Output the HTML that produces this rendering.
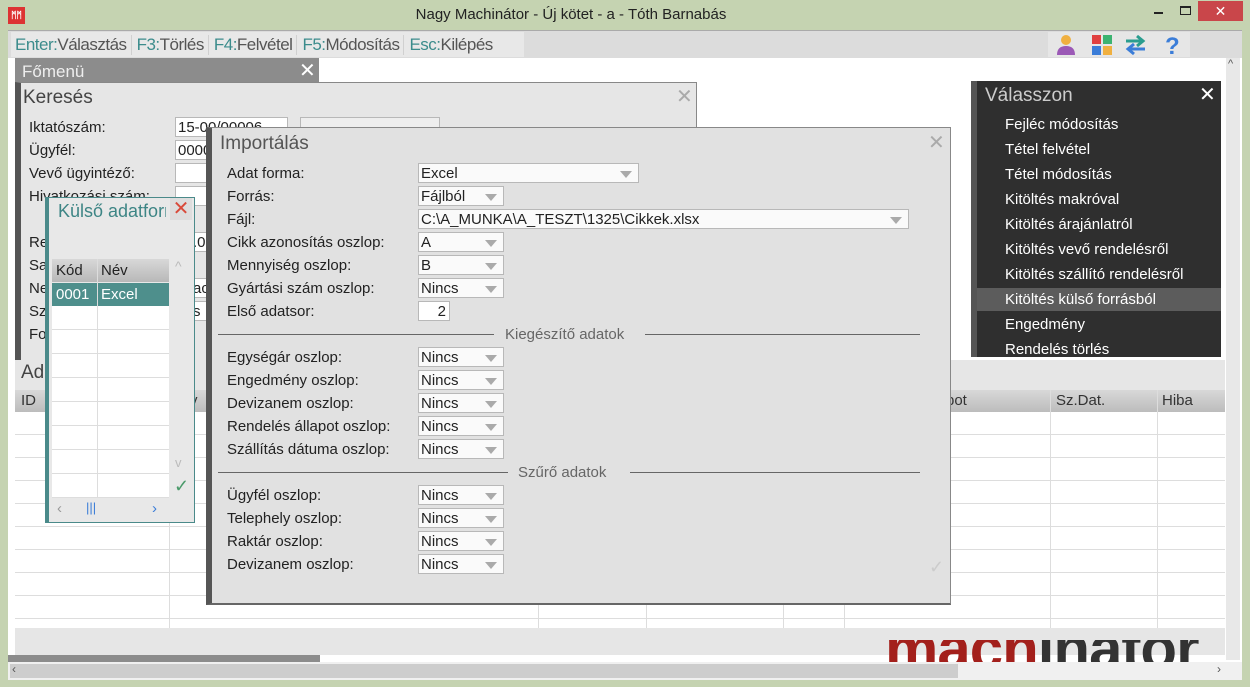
<!DOCTYPE html>
<html><head><meta charset="utf-8"><style>
*{margin:0;padding:0;box-sizing:border-box}
body{width:1250px;height:687px;overflow:hidden;background:#c5d3b1;font-family:"Liberation Sans",sans-serif;font-size:15px;color:#222;position:relative}
.a{position:absolute}
.lbl{position:absolute;font-size:15px;color:#222;white-space:nowrap}
.inp{position:absolute;background:#fff;border:1px solid #b8b8b8;height:20px;font-size:15px;padding-left:2px;line-height:20px;white-space:nowrap;overflow:hidden}
.dd::after{content:"";position:absolute;right:6px;top:7px;border-left:6px solid transparent;border-right:6px solid transparent;border-top:7px solid #aaa}
.dd{background:#fafafa}
.sep{position:absolute;height:1px;background:#666}
.mi{position:absolute;left:28px;color:#fff;font-size:15px;white-space:nowrap}
.tb{display:inline-block;padding:0 4px 0 5px;border-right:1px solid #d0d0d0}
.tb b{font-weight:normal;color:#3c8c8c}
</style></head><body>
<div class="a" style="left:8px;top:7px;width:17px;height:17px;background:#d33;color:#fff;font-size:9px;line-height:17px;text-align:center;font-weight:bold">ᛗᛗ</div>
<div class="a" style="left:0;top:6px;width:1142px;text-align:center;font-size:15px;color:#222">Nagy Machinátor - Új kötet - a - Tóth Barnabás</div>
<div class="a" style="left:1154px;top:12px;width:9px;height:2px;background:#222"></div>
<div class="a" style="left:1180px;top:6px;width:11px;height:9px;border:1px solid #222;border-top-width:2px"></div>
<div class="a" style="left:1198px;top:1px;width:45px;height:20px;background:#c9464a;color:#fff;text-align:center;font-size:14px;line-height:20px">✕</div>
<div class="a" style="left:8px;top:30px;width:1234px;height:650px;background:#fff;border-top:1px solid #aaa"></div>
<div class="a" style="left:8px;top:31px;width:1234px;height:27px;background:#dcdcdc"></div>
<div class="a" style="left:11px;top:32px;width:513px;height:25px;background:#e8e8e8"></div>
<div class="a" style="left:10px;top:35px;font-size:17px;color:#555;white-space:nowrap;letter-spacing:-0.5px">
<span class="tb"><b>Enter:</b>Választás</span><span class="tb"><b>F3:</b>Törlés</span><span class="tb"><b>F4:</b>Felvétel</span><span class="tb"><b>F5:</b>Módosítás</span><span class="tb" style="border:0"><b>Esc:</b>Kilépés</span></div>
<div class="a" style="left:1048px;top:32px;width:142px;height:25px;background:#e6e6e6"></div>
<svg class="a" style="left:1052px;top:33px" width="140" height="24">
<circle cx="14" cy="7" r="5" fill="#f0b040"/><path d="M5 22 Q5 13 14 13 Q23 13 23 22Z" fill="#9b59b6"/>
<rect x="40" y="2" width="9" height="9" fill="#e04040"/><rect x="51" y="2" width="9" height="9" fill="#3cb371"/><rect x="40" y="13" width="9" height="9" fill="#3b7dd8"/><rect x="51" y="13" width="9" height="9" fill="#f0b040"/>
<path d="M74 8 H90 M85 3 L91 8 L85 13" stroke="#2a9d8f" stroke-width="3" fill="none"/><path d="M93 16 H77 M82 11 L76 16 L82 21" stroke="#3b7dd8" stroke-width="3" fill="none"/>
<text x="113" y="21" font-family="Liberation Sans" font-size="24" font-weight="bold" fill="#3b7dd8">?</text>
</svg>
<div class="a" style="left:1226px;top:58px;width:14px;height:602px;background:#e8e8e8"></div>
<div class="a" style="left:1228px;top:58px;font-size:11px;color:#555">^</div>
<div class="a" style="left:15px;top:58px;width:304px;height:24px;background:#8c8c8c"></div>
<div class="a" style="left:22px;top:62px;color:#eee;font-size:17px">Főmenü</div>
<div class="a" style="left:299px;top:58px;color:#fff;font-size:20px">✕</div>
<div class="a" style="left:15px;top:82px;width:682px;height:280px;background:#e6e6e6;border-left:6px solid #555;border-top:1px solid #888;border-right:1px solid #888"></div>
<div class="a" style="left:23px;top:87px;font-size:19px;color:#444">Keresés</div>
<div class="a" style="left:676px;top:84px;font-size:20px;color:#aaa">✕</div>
<div class="lbl" style="left:29px;top:119px">Iktatószám:</div>
<div class="lbl" style="left:29px;top:142px">Ügyfél:</div>
<div class="lbl" style="left:29px;top:165px">Vevő ügyintéző:</div>
<div class="lbl" style="left:29px;top:188px">Hivatkozási szám:</div>
<div class="lbl" style="left:29px;top:234px">Re</div>
<div class="lbl" style="left:29px;top:257px">Sa</div>
<div class="lbl" style="left:29px;top:280px">Ne</div>
<div class="lbl" style="left:29px;top:303px">Sz</div>
<div class="lbl" style="left:29px;top:326px">Fo</div>
<div class="inp" style="left:175px;top:117px;width:113px">15-00/00006</div>
<div class="inp" style="left:300px;top:117px;width:140px;background:#eee"></div>
<div class="inp" style="left:175px;top:140px;width:40px">0000</div>
<div class="inp" style="left:175px;top:163px;width:40px"></div>
<div class="inp" style="left:175px;top:186px;width:40px"></div>
<div class="inp" style="left:190px;top:232px;width:25px">.0</div>
<div class="inp" style="left:190px;top:278px;width:25px">ac</div>
<div class="inp" style="left:190px;top:301px;width:25px">s</div>
<div class="a" style="left:15px;top:360px;width:1210px;height:30px;background:#e6e6e6"></div>
<div class="a" style="left:21px;top:362px;font-size:19px;color:#444">Ad</div>
<div class="a" style="left:15px;top:390px;width:1210px;height:22px;background:linear-gradient(#d8d8d8,#bcbcbc)"></div>
<div class="lbl" style="left:21px;top:392px;color:#333">ID</div>
<div class="lbl" style="left:190px;top:392px;color:#333">v</div>
<div class="lbl" style="left:946px;top:392px;color:#333">pot</div>
<div class="lbl" style="left:1056px;top:392px;color:#333">Sz.Dat.</div>
<div class="lbl" style="left:1162px;top:392px;color:#333">Hiba</div>
<div class="a" style="left:15px;top:412px;width:1210px;height:216px;background:repeating-linear-gradient(#fff 0 22px,#ddd 22px 23px)"></div>
<div class="a" style="left:169px;top:390px;width:1px;height:238px;background:#ddd"></div>
<div class="a" style="left:538px;top:412px;width:1px;height:216px;background:#ddd"></div>
<div class="a" style="left:646px;top:412px;width:1px;height:216px;background:#ddd"></div>
<div class="a" style="left:783px;top:412px;width:1px;height:216px;background:#ddd"></div>
<div class="a" style="left:844px;top:412px;width:1px;height:216px;background:#ddd"></div>
<div class="a" style="left:1050px;top:390px;width:1px;height:238px;background:#ddd"></div>
<div class="a" style="left:1157px;top:390px;width:1px;height:238px;background:#ddd"></div>
<div class="a" style="left:15px;top:628px;width:1210px;height:27px;background:#e6e6e6"></div>
<div class="a" style="left:8px;top:655px;width:312px;height:7px;background:#8c8c8c"></div>
<div class="a" style="left:885px;top:640px;width:335px;height:22px;overflow:hidden"><div style="position:absolute;top:-26px;left:0;font-size:60px;font-weight:bold;color:#a3201c;letter-spacing:-1px;white-space:nowrap">mach<span style="color:#333">inator</span></div></div>
<div class="a" style="left:8px;top:662px;width:1234px;height:18px;background:#f0f0f0"></div>
<div class="a" style="left:10px;top:664px;width:948px;height:14px;background:#cdcdcd"></div>
<div class="a" style="left:12px;top:662px;font-size:12px;color:#555">‹</div>
<div class="a" style="left:1217px;top:662px;font-size:12px;color:#555">›</div>
<div class="a" style="left:45px;top:197px;width:150px;height:326px;background:#e8e8e8;border:1px solid #4a8a8a;border-left:4px solid #4a8a8a"></div>
<div class="a" style="left:58px;top:201px;font-size:18px;color:#3d8585;width:108px;overflow:hidden;white-space:nowrap">Külső adatforrás</div>
<div class="a" style="left:170px;top:198px;width:22px;height:22px;background:#ddd;color:#d94a3a;font-size:20px;line-height:22px;text-align:center">✕</div>
<div class="a" style="left:52px;top:259px;width:117px;height:23px;background:linear-gradient(#d8d8d8,#b8b8b8)"></div>
<div class="lbl" style="left:56px;top:262px">Kód</div><div class="lbl" style="left:101px;top:262px">Név</div>
<div class="a" style="left:52px;top:283px;width:117px;height:23px;background:#4e8f8c"></div>
<div class="lbl" style="left:56px;top:286px;color:#fff">0001</div><div class="lbl" style="left:101px;top:286px;color:#fff">Excel</div>
<div class="a" style="left:52px;top:306px;width:117px;height:192px;background:repeating-linear-gradient(#fff 0 23px,#ddd 23px 24px)"></div>
<div class="a" style="left:97px;top:259px;width:1px;height:240px;background:#ddd"></div>
<div class="a" style="left:175px;top:258px;color:#bbb;font-size:14px">^</div>
<div class="a" style="left:175px;top:455px;color:#bbb;font-size:13px">v</div>
<div class="a" style="left:174px;top:476px;color:#4a9a6a;font-size:18px">✓</div>
<div class="a" style="left:52px;top:498px;width:117px;height:22px;background:#e8e8e8"></div>
<div class="a" style="left:57px;top:500px;color:#999">‹</div>
<div class="a" style="left:86px;top:500px;color:#3b7dd8;font-size:13px">|||</div>
<div class="a" style="left:152px;top:500px;color:#3b7dd8">›</div>
<div class="a" style="left:206px;top:127px;width:745px;height:478px;background:#e1e1e1;border:1px solid #888;border-left:6px solid #555;border-bottom:2px solid #666"></div>
<div class="a" style="left:220px;top:133px;font-size:19px;color:#555">Importálás</div>
<div class="a" style="left:928px;top:130px;font-size:20px;color:#aaa">✕</div>
<div class="lbl" style="left:227px;top:165px">Adat forma:</div>
<div class="lbl" style="left:227px;top:188px">Forrás:</div>
<div class="lbl" style="left:227px;top:211px">Fájl:</div>
<div class="lbl" style="left:227px;top:234px">Cikk azonosítás oszlop:</div>
<div class="lbl" style="left:227px;top:257px">Mennyiség oszlop:</div>
<div class="lbl" style="left:227px;top:280px">Gyártási szám oszlop:</div>
<div class="lbl" style="left:227px;top:303px">Első adatsor:</div>
<div class="inp dd" style="left:418px;top:163px;width:221px">Excel</div>
<div class="inp dd" style="left:418px;top:186px;width:86px">Fájlból</div>
<div class="inp dd" style="left:418px;top:209px;width:491px">C:\A_MUNKA\A_TESZT\1325\Cikkek.xlsx</div>
<div class="inp dd" style="left:418px;top:232px;width:86px">A</div>
<div class="inp dd" style="left:418px;top:255px;width:86px">B</div>
<div class="inp dd" style="left:418px;top:278px;width:86px">Nincs</div>
<div class="inp" style="left:418px;top:301px;width:32px;text-align:right;padding-right:3px">2</div>
<div class="sep" style="left:218px;top:334px;width:276px"></div>
<div class="lbl" style="left:505px;top:326px;color:#666">Kiegészítő adatok</div>
<div class="sep" style="left:645px;top:334px;width:275px"></div>
<div class="lbl" style="left:227px;top:349px">Egységár oszlop:</div>
<div class="lbl" style="left:227px;top:372px">Engedmény oszlop:</div>
<div class="lbl" style="left:227px;top:395px">Devizanem oszlop:</div>
<div class="lbl" style="left:227px;top:418px">Rendelés állapot oszlop:</div>
<div class="lbl" style="left:227px;top:441px">Szállítás dátuma oszlop:</div>
<div class="inp dd" style="left:418px;top:347px;width:86px">Nincs</div>
<div class="inp dd" style="left:418px;top:370px;width:86px">Nincs</div>
<div class="inp dd" style="left:418px;top:393px;width:86px">Nincs</div>
<div class="inp dd" style="left:418px;top:416px;width:86px">Nincs</div>
<div class="inp dd" style="left:418px;top:439px;width:86px">Nincs</div>
<div class="sep" style="left:218px;top:472px;width:290px"></div>
<div class="lbl" style="left:518px;top:464px;color:#666">Szűrő adatok</div>
<div class="sep" style="left:630px;top:472px;width:290px"></div>
<div class="lbl" style="left:227px;top:487px">Ügyfél oszlop:</div>
<div class="lbl" style="left:227px;top:510px">Telephely oszlop:</div>
<div class="lbl" style="left:227px;top:533px">Raktár oszlop:</div>
<div class="lbl" style="left:227px;top:556px">Devizanem oszlop:</div>
<div class="inp dd" style="left:418px;top:485px;width:86px">Nincs</div>
<div class="inp dd" style="left:418px;top:508px;width:86px">Nincs</div>
<div class="inp dd" style="left:418px;top:531px;width:86px">Nincs</div>
<div class="inp dd" style="left:418px;top:554px;width:86px">Nincs</div>
<div class="a" style="left:929px;top:557px;color:#ccc;font-size:18px">✓</div>
<div class="a" style="left:971px;top:81px;width:250px;height:276px;background:#2f2f2f;border-left:6px solid #555"></div>
<div class="a" style="left:985px;top:85px;font-size:19px;color:#ccc">Válasszon</div>
<div class="a" style="left:1199px;top:82px;font-size:20px;color:#fff">✕</div>
<div class="a" style="left:977px;top:288px;width:244px;height:23px;background:#5c5c5c"></div>
<div class="a" style="left:977px;top:104px">
<div class="mi" style="top:12px">Fejléc módosítás</div>
<div class="mi" style="top:37px">Tétel felvétel</div>
<div class="mi" style="top:62px">Tétel módosítás</div>
<div class="mi" style="top:87px">Kitöltés makróval</div>
<div class="mi" style="top:112px">Kitöltés árajánlatról</div>
<div class="mi" style="top:137px">Kitöltés vevő rendelésről</div>
<div class="mi" style="top:162px">Kitöltés szállító rendelésről</div>
<div class="mi" style="top:187px">Kitöltés külső forrásból</div>
<div class="mi" style="top:212px">Engedmény</div>
<div class="mi" style="top:237px">Rendelés törlés</div>
</div>
</body></html>
